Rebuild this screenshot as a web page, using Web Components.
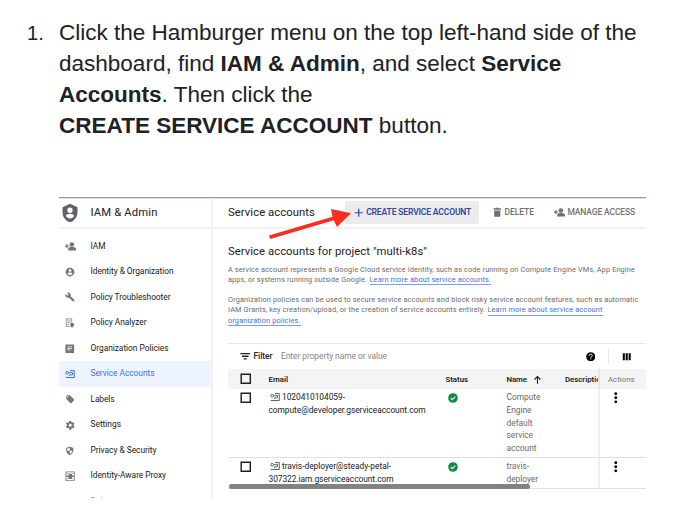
<!DOCTYPE html>
<html lang="en">
<head>
<meta charset="utf-8">
<title>Create a service account</title>
<style>
html,body{margin:0;background:#fff;overflow:hidden}
body{width:681px;height:525px}
</style>
</head>
<body>
<guide-step></guide-step>
<script>
const P = {
  shield:'<path fill-rule="evenodd" d="M12 1 3 5v6c0 5.600 3.800 10.700 9 12 5.200-1.300 9-6.400 9-12V5zM12 5.500a3.200 3.200 0 1 1 0 6.400A3.200 3.200 0 0 1 12 5.500zM7 15.700c.3-2 3-2.900 5-2.900s4.700.9 5 2.900c-1.200 1.800-3 2.800-5 2.800s-3.800-1-5-2.800z"/>',
  addperson:'<circle cx="15" cy="7.500" r="5"/><path d="M7 20.500V17c0-3 5-4.500 8-4.500s9 1.500 9 4.500v3.500zM3 6.500h2.400v3.500H8.500v2.400H5.400V16H3v-3.600H0V10h3z"/>',
  account:'<path fill-rule="evenodd" d="M12 1.500a10.500 10.500 0 1 0 0 21 10.500 10.500 0 0 0 0-21zm0 3.700a3.400 3.400 0 1 1 0 6.800 3.400 3.400 0 0 1 0-6.800zM5.800 16c.4-2 4.100-3.100 6.200-3.100s5.800 1.100 6.200 3.100A7.400 7.400 0 0 1 12 19.300 7.400 7.400 0 0 1 5.800 16z"/>',
  wrench:'<path d="m22.700 19-9.100-9.100c.9-2.300.4-5-1.500-6.900-2-2-5-2.400-7.400-1.300L9 6 6 9 1.600 4.700C.4 7.100.9 10.100 2.900 12.100c1.900 1.900 4.600 2.400 6.900 1.500l9.100 9.100c.4.4 1 .4 1.400 0l2.300-2.300c.5-.4.5-1.100.1-1.400z"/>',
  analyzer:'<path fill="none" stroke="currentColor" stroke-width="1.800" d="M11 20H3V2h13v9M6 7h7M6 11h6M6 15h4"/><path d="M17 11.500 12.500 13v4c0 3 2 5.200 4.500 6 2.500-.8 4.500-3 4.500-6v-4z"/>',
  policies:'<path fill-rule="evenodd" d="M3 1h18a2 2 0 0 1 2 2v18a2 2 0 0 1-2 2H3a2 2 0 0 1-2-2V3c0-1.100.9-2 2-2zm3 5v2h12V6zm0 4v2h12v-2zm0 4v2h7v-2z"/>',
  service:'<path fill="none" stroke="currentColor" stroke-width="2.400" d="M12 3.800h10.300v16M9 9h5M13 8.500h5v5.500H11v3M2 20.500h21"/><circle cx="5.200" cy="9" r="3.300" fill="none" stroke="currentColor" stroke-width="2.400"/>',
  label:'<path fill-rule="evenodd" d="m21.400 12.600-9-9C12 3.200 11.500 3 11 3H5a2 2 0 0 0-2 2v6c0 .6.2 1.100.6 1.400l9 9c.8.8 2 .8 2.800 0l6-6c.8-.8.8-2 0-2.800zM6.500 8a1.500 1.500 0 1 1 0-3 1.500 1.500 0 0 1 0 3z"/>',
  gear:'<path fill-rule="evenodd" d="m19.400 13 .1-1-.1-1 2.100-1.600c.2-.2.300-.4.100-.7l-2-3.400c-.1-.2-.4-.3-.6-.2l-2.500 1c-.5-.4-1.100-.7-1.700-1l-.4-2.600a.5.5 0 0 0-.5-.5h-4c-.2 0-.4.200-.5.500l-.4 2.600c-.6.3-1.200.6-1.700 1L4.900 5c-.2-.1-.5 0-.6.200l-2 3.400c-.1.300-.1.500.1.700L4.600 11l-.1 1 .1 1-2.200 1.600c-.2.200-.2.400-.1.700l2 3.400c.1.200.4.300.6.200l2.500-1c.5.4 1.100.7 1.700 1l.4 2.600c.1.300.3.500.5.500h4c.300 0 .5-.2.500-.5l.4-2.600c.6-.3 1.200-.6 1.700-1l2.500 1c.2.1.5 0 .6-.2l2-3.400c.2-.3.1-.5-.1-.7zM12 15.300a3.300 3.300 0 1 1 0-6.600 3.300 3.300 0 0 1 0 6.600z"/>',
  security:'<path fill-rule="evenodd" d="M12 1 3 5v6c0 5.600 3.800 10.700 9 12 5.200-1.300 9-6.400 9-12V5zm0 3v8h6.500c-.5 3.800-3 7-6.500 8.200V12H5.500V7z"/>',
  proxy:'<path fill="none" stroke="currentColor" stroke-width="1.800" d="M2 2h20v20H2z"/><path d="M3 10.500h18v3H3zM8 6h8v12H8zM4 5h3v2H4zM17 5h3v2h-3zM4 17h3v2H4zM17 17h3v2h-3z"/>',
  plus:'<path d="M10.500 2h3v8.500H22v3h-8.500V22h-3v-8.500H2v-3h8.500z"/>',
  trash:'<path d="M5 8h14v12a2 2 0 0 1-2 2H7a2 2 0 0 1-2-2zM15.500 3l-1-1.500h-5L8.500 3H3.500v3.500h17V3z"/>',
  filter:'<path d="M1 4.500h22v3H1zM4.500 10.500h15v3h-15zM8.500 16.500h7v3h-7z"/>',
  help:'<circle cx="12" cy="12" r="11.500"/><path fill="none" stroke="#fff" stroke-width="2.500" d="M8 9.500C8 4 16 4.500 16 9c0 3-4 3-4 6"/><path fill="#fff" d="M10.700 16.500h2.600v2.600h-2.600z"/>',
  columns:'<path d="M2 3h5.200v18H2zM9.400 3h5.200v18H9.400zM16.800 3H22v18h-5.200z"/>',
  box:'<path fill="none" stroke="currentColor" stroke-width="3" d="M2.500 2.500h19v19h-19z"/>',
  check:'<circle cx="12" cy="12" r="11.500"/><path fill="none" stroke="#fff" stroke-width="2.600" d="m6.500 12.300 3.700 3.700 7.300-7.500"/>',
  up:'<path fill="none" stroke="currentColor" stroke-width="3" d="M12 23V4M4 12l8-8 8 8"/>',
  dots:'<circle cx="12" cy="3.500" r="3"/><circle cx="12" cy="12" r="3"/><circle cx="12" cy="20.500" r="3"/>'
};
P.settings = P.gear;
const define = (name, html) => customElements.define(name, class extends HTMLElement {
  connectedCallback(){
    if (this.shadowRoot) return;
    const t = document.createElement('template');
    t.innerHTML = html;
    this.attachShadow({mode:'open'}).append(document.importNode(t.content, true));
  }
});

/* <ui-icon name size> : a glyph on a 24-unit grid */
customElements.define('ui-icon', class extends HTMLElement {
  connectedCallback(){
    if (this.shadowRoot) return;
    const s = this.getAttribute('size') || 10;
    this.attachShadow({mode:'open'}).innerHTML =
      `<style>:host{display:inline-flex;flex:none}svg{width:${s}px;height:${s}px;fill:currentColor;display:block}</style><svg viewBox="0 0 24 24">${P[this.getAttribute('name')]}</svg>`;
  }
});

/* <fit-text w> : one line of text, tracked to the given width */
customElements.define('fit-text', class extends HTMLElement {
  connectedCallback(){
    if (this.shadowRoot) return;
    this.attachShadow({mode:'open'}).innerHTML =
      '<style>:host{display:inline-block;white-space:nowrap;flex:none}</style><span><slot></slot></span>';
    const span = this.shadowRoot.querySelector('span');
    const n = this.textContent.length;
    span.style.letterSpacing = (this.getAttribute('w') - span.getBoundingClientRect().width) / n + 'px';
  }
});

define('nav-item', `<style>
:host{display:flex;align-items:center;height:25.500px;padding-left:5.500px;color:#757575;font-size:8.400px}
:host([selected]){background:#eef4fe;color:#4272db}
span{color:#202124}
:host([selected]) span{color:#4272db}
:host([faded]) span{color:#a0a0a0}
::slotted(ui-icon){width:11px;justify-content:center;margin-right:15px}
</style><slot name="icon"></slot><span><slot></slot></span>`);

const items = [['addperson','IAM',15,11],['account','Identity &amp; Organization',83,10],['wrench','Policy Troubleshooter',80,10],
 ['analyzer','Policy Analyzer',56,10],['policies','Organization Policies',78,9.5],['service','Service Accounts',64,10],
 ['label','Labels',24,10],['settings','Settings',30.5,10.5],['security','Privacy &amp; Security',66,9.5],['proxy','Identity-Aware Proxy',75.5,10.5],['label','Roles',20,10]];

define('side-nav', `<style>
:host{display:flex;flex-direction:column;width:152px;border-right:2px solid #f1f1f1;overflow:hidden}
header{display:flex;align-items:center;height:29px;border-bottom:2px solid #f3f3f3;padding-left:1px;color:#5f6368;font-size:11.300px;flex:none}
header fit-text{color:#202124;margin-left:10.500px}
nav{padding-top:4.700px}
</style><header><ui-icon name="shield" size="20"></ui-icon><fit-text w="67">IAM &amp; Admin</fit-text></header>
<nav>${items.map(([i,t,w,s])=>`<nav-item ${i==='service'?'selected':''} ${t==='Roles'?'faded':''}><ui-icon slot="icon" name="${i}" size="${s}" ${t==='Roles'?'style="visibility:hidden"':''}></ui-icon><fit-text w="${w}">${t}</fit-text></nav-item>`).join('')}</nav>`);

define('action-bar', `<style>
:host{display:flex;align-items:center;height:29px;border-bottom:2px solid #f3f3f3;padding-left:15px;font-size:8.500px;font-weight:500;color:#707070;flex:none}
.title{font-size:11.300px;font-weight:400;color:#202124}
.create{display:flex;align-items:center;height:23px;width:134px;margin-left:30px;background:#ebebeb;border-radius:2px;color:#3046a5;box-sizing:border-box;padding-left:8.500px}
.create fit-text{margin-left:3.200px;font-weight:600}
.del,.man{display:flex;align-items:center}
.del{margin-left:13px}.del fit-text{margin-left:2px}
.man{margin-left:20px}.man fit-text{margin-left:2.500px}
</style><fit-text class="title" w="87">Service accounts</fit-text>
<div class="create"><ui-icon name="plus" size="9.500"></ui-icon><fit-text w="105">CREATE SERVICE ACCOUNT</fit-text></div>
<div class="del"><ui-icon name="trash" size="10.500"></ui-icon><fit-text w="29.500">DELETE</fit-text></div>
<div class="man"><ui-icon name="addperson" size="11"></ui-icon><fit-text w="67.500">MANAGE ACCESS</fit-text></div>`);

define('page-intro', `<style>
:host{display:block;box-sizing:border-box;padding:14px 0 0 15px;height:114px;font-size:7.350px;color:#6b6b6b;flex:none}
h2{margin:0 0 3.500px;font-size:11.300px;line-height:18px;font-weight:400;color:#202124}
div{display:flex;height:10.300px;line-height:10.300px}
.gap{margin-top:10px}
a{color:#3f72d8;height:9.300px;border-bottom:1px solid #7ba0e8}
a.next{margin-left:2.500px}
</style><h2><fit-text w="199">Service accounts for project "multi-k8s"</fit-text></h2>
<div><fit-text w="407">A service account represents a Google Cloud service identity, such as code running on Compute Engine VMs, App Engine</fit-text></div>
<div><fit-text w="139">apps, or systems running outside Google.</fit-text><a class="next"><fit-text w="121.500">Learn more about service accounts.</fit-text></a></div>
<div class="gap"><fit-text w="410.500">Organization policies can be used to secure service accounts and block risky service account features, such as automatic</fit-text></div>
<div><fit-text w="257">IAM Grants, key creation/upload, or the creation of service accounts entirely.</fit-text><a class="next"><fit-text w="115">Learn more about service account</fit-text></a></div>
<div><a><fit-text w="72.500">organization policies.</fit-text></a></div>`);

define('account-row', `<style>
:host{display:grid;grid-template-columns:40.500px 177.500px 60.500px 91px 48px;height:var(--h);border-bottom:1px solid #e0e0e0;box-sizing:border-box;font-size:8.400px;line-height:12.800px;color:#202124}
.check{padding:3px 0 0 12px}
.mail,.name{padding-top:2px}
.name{color:#6b6b6b}
.status{padding:3.500px 0 0 2px;color:#0f8a43}
.act{border-left:2px solid #efefef;color:#000;padding:3px 0 0 10px;box-sizing:border-box}
::slotted(div){height:12.800px;display:flex;align-items:center;gap:2.500px}
</style><div class="check"><ui-icon name="box" size="11.500"></ui-icon></div><div class="mail"><slot name="mail"></slot></div>
<div class="status"><ui-icon name="check" size="10"></ui-icon></div><div class="name"><slot name="name"></slot></div><div class="act"><ui-icon name="dots" size="11.500"></ui-icon></div>`);

define('accounts-table', `<style>
:host{display:block;position:relative;margin-left:15px;border-top:1px solid #e8e8e8;font-size:8.400px;color:#202124;flex:none}
.filter{height:25px;display:flex;align-items:center;padding-left:12px}
.filter b{margin-left:3px;font-weight:500}
.ph{color:#858585;margin-left:8.500px}
.tools{margin-left:auto;display:flex;align-items:center;color:#000;padding-right:14.500px}
.tools i{width:1px;height:15px;background:#e8e8e8;margin:0 13px 0 13px}
.head{display:grid;grid-template:20px/40.500px 177.500px 60.500px 58.500px 32.500px 48px;background:#f4f4f4;align-items:center;font-size:7.800px;font-weight:600}
.head>:first-child{padding-left:12px}
.nm{display:flex;align-items:center;gap:5.500px}
.clip{overflow:hidden;display:flex}
.act{border-left:2px solid #e4e4e4;height:100%;display:flex;align-items:center;font-weight:400;color:#757575;padding-left:8.500px;box-sizing:border-box}
.bar{position:absolute;left:1px;top:139.500px;width:301px;height:5px;border-radius:2.500px;background:#828282}
.mi{color:#5f6368;margin-left:1px}
</style>
<div class="filter"><ui-icon name="filter" size="10.500"></ui-icon><b><fit-text w="19">Filter</fit-text></b><fit-text class="ph" w="106">Enter property name or value</fit-text>
<div class="tools"><ui-icon name="help" size="9.500"></ui-icon><i></i><ui-icon name="columns" size="9.500"></ui-icon></div></div>
<div class="head"><ui-icon name="box" size="11.500"></ui-icon><fit-text w="19.500">Email</fit-text><fit-text w="22.500" style="margin-left:-.5px">Status</fit-text><div class="nm"><fit-text w="20.500">Name</fit-text><ui-icon name="up" size="9"></ui-icon></div><div class="clip"><fit-text w="40">Description</fit-text></div><div class="act"><fit-text w="26.500">Actions</fit-text></div></div>
<account-row style="--h:69px"><div slot="mail"><ui-icon class="mi" name="service" size="10"></ui-icon><fit-text w="63">1020410104059-</fit-text></div><div slot="mail"><fit-text w="157">compute@developer.gserviceaccount.com</fit-text></div>
<div slot="name"><fit-text w="34">Compute</fit-text></div><div slot="name"><fit-text w="25">Engine</fit-text></div><div slot="name"><fit-text w="26">default</fit-text></div><div slot="name"><fit-text w="26.500">service</fit-text></div><div slot="name"><fit-text w="30">account</fit-text></div></account-row>
<account-row style="--h:31px"><div slot="mail"><ui-icon class="mi" name="service" size="10"></ui-icon><fit-text w="109">travis-deployer@steady-petal-</fit-text></div><div slot="mail"><fit-text w="125">307322.iam.gserviceaccount.com</fit-text></div>
<div slot="name"><fit-text w="22.500">travis-</fit-text></div><div slot="name"><fit-text w="31.500">deployer</fit-text></div></account-row>
<div class="bar"></div>`);

define('cloud-console', `<style>
:host{display:flex;position:relative;width:587px;height:301px;box-sizing:border-box;border-top:1px solid #929baa;background:#fff;overflow:hidden;font-family:Roboto,"Open Sans",sans-serif;box-shadow:inset 0 1px #dcdfe4}
main{width:433px;display:flex;flex-direction:column}
.arrow{position:absolute;left:205px;top:4px}
</style><side-nav></side-nav><main><action-bar></action-bar><page-intro></page-intro><accounts-table></accounts-table></main>
<svg class="arrow" width="90" height="40" viewBox="0 0 90 40" fill="#fb2c20"><path d="M5 33.600 68.500 14.800 67 7l20 4.300L73 25l-3.200-6.700L6.200 37z"/></svg>`);

define('guide-step', `<style>
:host{display:grid;grid-template-columns:32px 1fr;align-items:baseline;padding:17px 35px 0 27px;font:22.530px/31px "Liberation Sans",Arial,sans-serif;color:#202124}
.n{font-size:20.200px}
p{margin:0;height:124px;white-space:nowrap}
cloud-console{grid-column:2;margin-top:56px}
</style><div class="n">1.</div><p><fit-text w="577.500">Click the Hamburger menu on the top left-hand side of the</fit-text><br>dashboard, find <b>IAM &amp; Admin</b>, and select <b>Service</b><br><b>Accounts</b>. Then click the<br><b>CREATE SERVICE ACCOUNT</b> button.</p><cloud-console></cloud-console>`);
</script>
</body>
</html>
